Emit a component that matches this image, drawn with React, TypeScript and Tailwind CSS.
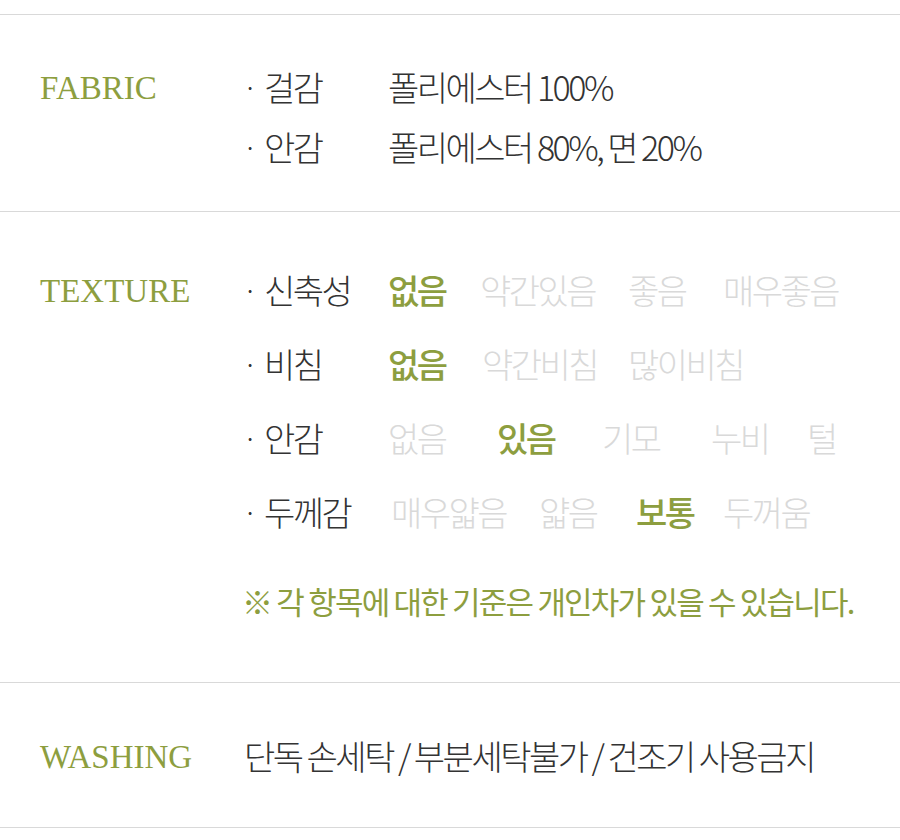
import React from "react";

const serif = { fontFamily: '"Liberation Serif", "Times New Roman", serif' };
const kr = { fontFamily: '"Noto Sans CJK KR", "Noto Sans", sans-serif' };

type Opt = { t: string; on?: boolean; w?: string };

const textureRows: { label: string; start: string; opts: Opt[] }[] = [
    {
        label: "신축성",
        start: "pl-0",
        opts: [
            { t: "없음", on: true, w: "w-[92px]" },
            { t: "약간있음", w: "w-[148px]" },
            { t: "좋음", w: "w-[95px]" },
            { t: "매우좋음" },
        ],
    },
    {
        label: "비침",
        start: "pl-0",
        opts: [
            { t: "없음", on: true, w: "w-[94px]" },
            { t: "약간비침", w: "w-[146px]" },
            { t: "많이비침" },
        ],
    },
    {
        label: "안감",
        start: "pl-0",
        opts: [
            { t: "없음", w: "w-[109px]" },
            { t: "있음", on: true, w: "w-[105px]" },
            { t: "기모", w: "w-[109px]" },
            { t: "누비", w: "w-[96px]" },
            { t: "털" },
        ],
    },
    {
        label: "두께감",
        start: "pl-[3px]",
        opts: [
            { t: "매우얇음", w: "w-[148px]" },
            { t: "얇음", w: "w-[97px]" },
            { t: "보통", on: true, w: "w-[87px]" },
            { t: "두꺼움" },
        ],
    },
];

function Label({ children }: { children: React.ReactNode }) {
    return (
        <div style={serif} className="mt-[4px] w-[240px] shrink-0 pl-[40px] text-[33px] leading-none text-[#8d9e3f]">
            {children}
        </div>
    );
}

function Bullet({ label }: { label: string }) {
    return (
        <div className="flex w-[148px] shrink-0 items-center">
            <span className="w-[24px] pl-[4px] text-[22px] font-normal text-[#333]">·</span>
            <span className="tracking-[-2.5px]">{label}</span>
        </div>
    );
}

export default function App() {
    return (
        <div style={kr} className="min-h-[840px] bg-white pt-[14px] font-light text-[34px] text-[#333]">
            <div className="border-t border-[#d9d9d9]">
                {/* fabric */}
                <div className="flex pt-[41px] pb-[35px]">
                    <div className="flex h-[60px] items-center">
                        <Label>FABRIC</Label>
                    </div>
                    <div className="flex flex-col">
                        <div className="flex h-[60px] items-center">
                            <Bullet label="걸감" />
                            <span className="tracking-[-2.5px]">폴리에스터 100%</span>
                        </div>
                        <div className="flex h-[60px] items-center">
                            <Bullet label="안감" />
                            <span className="tracking-[-2.5px]">폴리에스터 80%, 면 20%</span>
                        </div>
                    </div>
                </div>

                {/* texture */}
                <div className="flex border-t border-[#d9d9d9] pt-[40px] pb-[59px]">
                    <div className="flex h-[74px] items-center">
                        <Label>TEXTURE</Label>
                    </div>
                    <div className="flex flex-col">
                        {textureRows.map((r) => (
                            <div key={r.label} className="flex h-[74px] items-center">
                                <Bullet label={r.label} />
                                <div className={`flex items-center ${r.start}`}>
                                    {r.opts.map((o) => (
                                        <span
                                            key={o.t}
                                            className={`${o.w ?? ""} shrink-0 tracking-[-2.5px] ${o.on ? "font-medium text-[#8d9e3f]" : "text-[#d9d9d9]"}`}
                                        >
                                            {o.t}
                                        </span>
                                    ))}
                                </div>
                            </div>
                        ))}
                        <div className="mt-[31px] ml-[2px] text-[31px] leading-[44px] tracking-[-1.8px] text-[#8d9e3f] font-normal">
                            ※ 각 항목에 대한 기준은 개인차가 있을 수 있습니다.
                        </div>
                    </div>
                </div>

                {/* washing */}
                <div className="flex h-[146px] items-center border-t border-b border-[#d9d9d9]">
                    <Label>WASHING</Label>
                    <span className="pl-[4px] tracking-[-2.5px]">단독 손세탁 / 부분세탁불가 / 건조기 사용금지</span>
                </div>
            </div>
        </div>
    );
}
